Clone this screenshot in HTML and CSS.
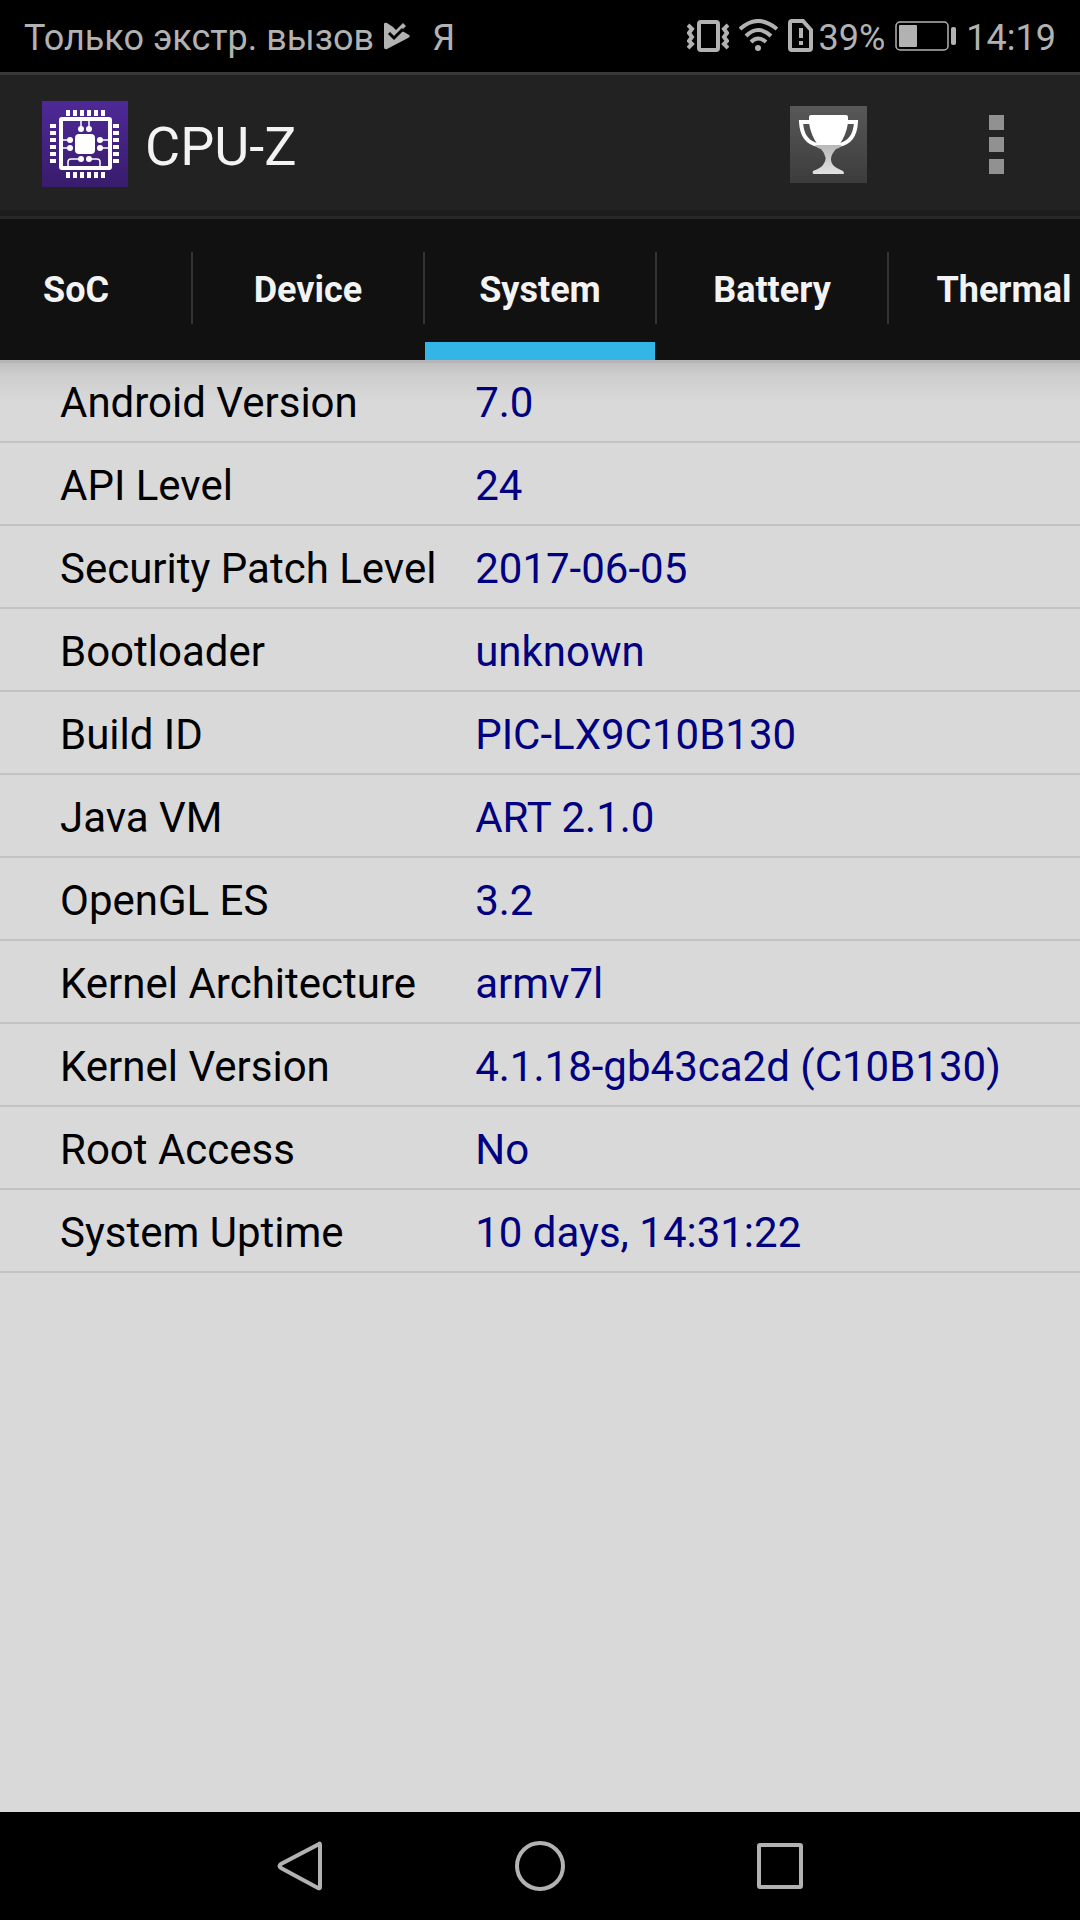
FILE: index.html
```
<!DOCTYPE html>
<html lang="en">
<head>
    <meta charset="UTF-8">
    <meta name="viewport" content="width=device-width, initial-scale=1.0">
    <title>CPU-Z</title>
    <link rel="stylesheet" href="styles.css">
</head>
<body>
    <div id="wrap">
        <!-- status bar -->
        <div id="status">
            <div class="notice">
                <span lang="ru">Только экстр. вызов</span>
                <svg width="26" height="28" viewBox="0 0 26 28">
                    <path d="M0 2Q0 0 3 1L9 5L12 8L19 1L22 4L17 9L20 10L25 13Q27 14 24 16L3 27Q0 28 0 25Z" fill="#b2b2b2"/>
                    <path d="M5 11L10 16L19 7" fill="none" stroke="#000" stroke-width="3"/>
                </svg>
                <span class="yandex" lang="ru">Я</span>
            </div>
            <div class="signals">
                <svg width="42" height="34" viewBox="0 0 42 34" fill="none" stroke="#b2b2b2" stroke-width="4">
                    <rect x="12" y="3" width="19" height="28" rx="2"/>
                    <path d="M1 6L5 10L2 14L5 18L2 22L5 25L1 29M41 6L37 10L40 14L37 18L40 22L37 25L41 29" stroke-width="4"/>
                </svg>
                <svg width="39" height="34" viewBox="0 0 39 34" fill="none" stroke="#b2b2b2" stroke-width="4">
                    <path d="M1 10Q19 -6 38 10M7 17Q19 5 32 17M12 23Q19 16 27 23"/>
                    <circle cx="19" cy="29" r="3" fill="#b2b2b2" stroke="none"/>
                </svg>
                <svg width="25" height="34" viewBox="0 0 25 34" fill="none" stroke="#b2b2b2" stroke-width="4">
                    <path d="M3 2H15L23 11V29Q23 31 21 31H4Q2 31 2 29V4Q2 2 4 2"/>
                    <path d="M13 9V19M13 22V26"/>
                </svg>
                <span class="percent">39%</span>
                <svg width="61" height="30" viewBox="0 0 61 30" fill="none" stroke="#b2b2b2" stroke-width="1.5">
                    <rect x="1" y="1" width="52" height="28" rx="4"/>
                    <rect x="4" y="4" width="18" height="22" rx="1" fill="#b2b2b2" stroke="none"/>
                    <rect x="56" y="6" width="5" height="18" rx="2" fill="#b2b2b2" stroke="none"/>
                </svg>
                <span>14:19</span>
            </div>
        </div>

        <!-- action bar -->
        <header id="header">
            <svg class="logo" width="86" height="86" viewBox="0 0 86 86">
                <defs>
                    <linearGradient id="purple" x1="0" y1="0" x2="0" y2="1">
                        <stop offset="0" stop-color="#4e2998"/>
                        <stop offset="1" stop-color="#381c6c"/>
                    </linearGradient>
                </defs>
                <rect width="86" height="86" fill="url(#purple)"/>
                <g fill="none" stroke="#fff">
                    <rect x="19" y="18" width="49" height="49" rx="1" stroke-width="4"/>
                    <!-- pins -->
                    <path d="M24 12H64M24 74H64" stroke-width="6" stroke-dasharray="4 3"/>
                    <path d="M11 23V63M74 23V63" stroke-width="6" stroke-dasharray="4 3"/>
                    <path d="M39 19V28M47 19V28M20 39H28M20 47H28M58 39H66M58 47H66M39 58H29Q26 58 26 61V67M47 58H55Q58 58 58 61V67" stroke-width="1.5"/>
                </g>
                <g fill="#fff">
                    <rect x="33" y="33" width="20" height="20" rx="4"/>
                    <circle cx="39" cy="28" r="3"/><circle cx="47" cy="28" r="3"/>
                    <circle cx="28" cy="39" r="3"/><circle cx="28" cy="47" r="3"/>
                    <circle cx="58" cy="39" r="3"/><circle cx="58" cy="47" r="3"/>
                    <circle cx="39" cy="58" r="3"/><circle cx="47" cy="58" r="3"/>
                </g>
            </svg>
            <h1>CPU-Z</h1>
            <button class="trophy" aria-label="Ranking">
                <svg width="77" height="77" viewBox="0 0 77 77">
                    <defs>
                        <linearGradient id="gray" x1="0" y1="0" x2="0" y2="1">
                            <stop offset="0" stop-color="#585858"/>
                            <stop offset="1" stop-color="#3c3c3c"/>
                        </linearGradient>
                        <linearGradient id="foot" x1="0" y1="0" x2="0" y2="1">
                            <stop offset="0" stop-color="#b8b8b8"/>
                            <stop offset="1" stop-color="#e2e2e2"/>
                        </linearGradient>
                    </defs>
                    <rect width="77" height="77" fill="url(#gray)"/>
                    <path d="M21 16H11Q12 36 28 39M56 16H66Q65 36 49 39" fill="none" stroke="#fff" stroke-width="4"/>
                    <path d="M19 11Q19 9 21 9H56Q58 9 58 11V17Q56 30 49 39H28Q21 30 19 17Z" fill="#fff"/>
                    <path d="M25 39H52Q50 42 46 43Q37 53 44 60Q46 62 53 65Q55 68 53 68H24Q22 68 23 65Q31 62 33 59Q39 52 31 43Q27 42 25 39Z" fill="url(#foot)"/>
                </svg>
            </button>
            <button class="more" aria-label="More options">
                <i></i><i></i><i></i>
            </button>
        </header>

        <nav id="tabs">
            <button class="tab">SoC</button>
            <span class="line"></span>
            <button class="tab">Device</button>
            <span class="line"></span>
            <button class="tab on">System</button>
            <span class="line"></span>
            <button class="tab">Battery</button>
            <span class="line"></span>
            <button class="tab">Thermal</button>
        </nav>

        <main id="content">
            <table>
                <tr><th scope="row">Android Version</th><td>7.0</td></tr>
                <tr><th scope="row">API Level</th><td>24</td></tr>
                <tr><th scope="row">Security Patch Level</th><td>2017-06-05</td></tr>
                <tr><th scope="row">Bootloader</th><td>unknown</td></tr>
                <tr><th scope="row">Build ID</th><td>PIC-LX9C10B130</td></tr>
                <tr><th scope="row">Java VM</th><td>ART 2.1.0</td></tr>
                <tr><th scope="row">OpenGL ES</th><td>3.2</td></tr>
                <tr><th scope="row">Kernel Architecture</th><td>armv7l</td></tr>
                <tr><th scope="row">Kernel Version</th><td>4.1.18-gb43ca2d (C10B130)</td></tr>
                <tr><th scope="row">Root Access</th><td>No</td></tr>
                <tr><th scope="row">System Uptime</th><td>10 days, 14:31:22</td></tr>
            </table>
        </main>

        <!-- system keys -->
        <div id="keys">
            <button aria-label="Back">
                <svg width="50" height="50" viewBox="0 0 50 50"><path d="M44 3Q45 2 45 4V46Q45 48 43 47L6 27Q3 25 6 23Z"/></svg>
            </button>
            <button aria-label="Home">
                <svg width="50" height="50" viewBox="0 0 50 50"><circle cx="25" cy="25" r="23"/></svg>
            </button>
            <button aria-label="Recent apps">
                <svg width="50" height="50" viewBox="0 0 50 50"><rect x="4" y="4" width="42" height="42" rx="1"/></svg>
            </button>
        </div>
    </div>
</body>
</html>
```
FILE: styles.css
```
*{margin: 0; padding: 0; box-sizing: border-box;}
body {
    background: #000;
    font-family: Roboto, "Noto Sans", sans-serif;
}
button {
    border: 0;
    background: none;
    font-family: inherit;
    color: inherit;
}
svg {
    display: block;
    flex: none;
}
#wrap {
    min-height: 100vh;
    display: flex;
    flex-direction: column;
    overflow: hidden;
}
#status {
    height: 72px;
    padding: 0 24px;
    display: flex;
    justify-content: space-between;
    align-items: center;
    font-size: 36px;
    color: #b2b2b2;
    white-space: nowrap;
}
#status span {
    padding-top: 4px;
}
.notice, .signals {
    display: flex;
    align-items: center;
    gap: 10px;
}
.yandex {
    margin-left: 12px;
}
.percent {
    margin-left: -4px;
}
#header {
    height: 147px;
    padding: 0 42px 3px;
    display: flex;
    align-items: center;
    border-top: 3px solid #393939;
    border-bottom: 3px solid #272727;
    background: linear-gradient(to top, #1c1c1c 6px, #222 6px);
    color: #f3f3f3;
}
#header h1 {
    margin-left: 17px;
    padding-top: 4px;
    font-size: 54px;
    font-weight: 400;
}
.trophy {
    margin-left: auto;
}
.more {
    width: 84px;
    margin-left: 87px;
    display: flex;
    flex-direction: column;
    align-items: center;
    gap: 7px;
}
.more i {
    width: 15px;
    height: 15px;
    background: #919191;
}
#tabs {
    height: 141px;
    display: flex;
    justify-content: center;
    background: #111;
}
.tab {
    flex: none;
    width: 230px;
    border-top: 18px solid transparent;
    border-bottom: 18px solid transparent;
    color: #f3f3f3;
    font-size: 36px;
    font-weight: 700;
}
.tab.on {
    border-bottom-color: #33b5e5;
}
.line {
    flex: none;
    width: 2px;
    height: 72px;
    margin-top: 33px;
    background: #333;
}
#content {
    flex: 1;
    background: linear-gradient(#b5b5b5 3px, #c0c0c0 3px, #cecece 16px, #d9d9d9 42px);
}
table {
    width: 100%;
    border-spacing: 0;
    font-size: 42px;
}
th, td {
    height: 83px;
    padding-top: 4px;
    border-bottom: 2px solid #c3c3c3;
    text-align: left;
    font-weight: 400;
    white-space: nowrap;
}
th {
    width: 44%;
    padding-left: 60px;
    color: #000;
}
td {
    color: #000080;
}
#keys {
    height: 108px;
    display: flex;
    justify-content: center;
}
#keys button {
    width: 240px;
    display: flex;
    justify-content: center;
    align-items: center;
}
#keys svg {
    fill: none;
    stroke: #b2b2b2;
    stroke-width: 4;
}
```
